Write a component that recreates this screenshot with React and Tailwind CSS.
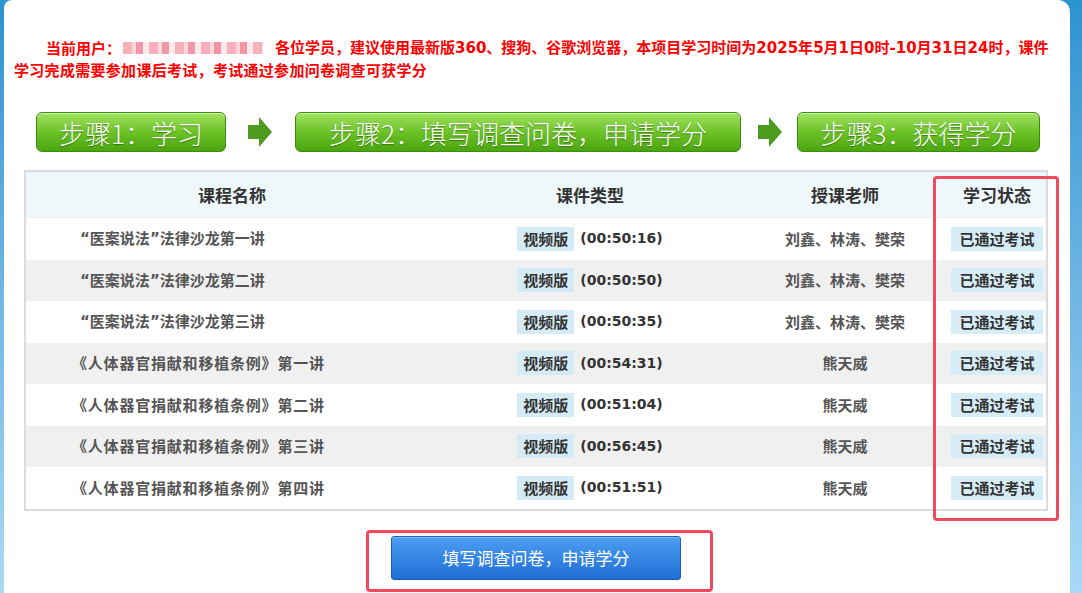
import React from "react";

const Q = ({ c }) => (
  <span style={{ fontFamily: "Verdana, 'DejaVu Sans', sans-serif" }}>{c}</span>
);

const rows = [
  [<><Q c={"\u201C"} />医案说法<Q c={"\u201D"} />法律沙龙第一讲</>, "(00:50:16)", "刘鑫、林涛、樊荣", false],
  [<><Q c={"\u201C"} />医案说法<Q c={"\u201D"} />法律沙龙第二讲</>, "(00:50:50)", "刘鑫、林涛、樊荣", false],
  [<><Q c={"\u201C"} />医案说法<Q c={"\u201D"} />法律沙龙第三讲</>, "(00:50:35)", "刘鑫、林涛、樊荣", false],
  ["《人体器官捐献和移植条例》第一讲", "(00:54:31)", "熊天威", true],
  ["《人体器官捐献和移植条例》第二讲", "(00:51:04)", "熊天威", true],
  ["《人体器官捐献和移植条例》第三讲", "(00:56:45)", "熊天威", true],
  ["《人体器官捐献和移植条例》第四讲", "(00:51:51)", "熊天威", true],
];

const font = { fontFamily: "Verdana, 'DejaVu Sans', 'Noto Sans CJK SC', sans-serif" };

function Step({ w, children }) {
  return (
    <div
      className={`${w} h-[40px] shrink-0 rounded-[6px] border border-[#3d8c0c] bg-gradient-to-b from-[#a2e260] via-[#6cc326] to-[#4aa50e] flex items-center justify-center text-white text-[26px] font-light [text-shadow:0_1px_1px_rgba(0,0,0,0.35)] shadow-[inset_0_1px_0_rgba(255,255,255,0.5)]`}
      style={{ fontFamily: "'Noto Sans CJK SC', sans-serif" }}
    >
      {children}
    </div>
  );
}

function Arrow() {
  return (
    <svg width="24" height="30" viewBox="0 0 24 30" className="shrink-0">
      <polygon points="0,8 11,8 11,0 24,15 11,30 11,22 0,22" fill="#4e9a1e" />
    </svg>
  );
}

export default function App() {
  return (
    <div className="w-[1082px] h-[593px] overflow-hidden bg-gradient-to-b from-[#2a93d0] to-[#a9d9f6] flex pl-[4px] pr-[12px]">
      <div className="flex-1 bg-white rounded-tl-[8px] rounded-tr-[12px] flex flex-col">
        <div
          className="pt-[36px] pl-[10px] pr-[4px] text-[15px] font-bold text-[#ff0000] leading-[21px] whitespace-nowrap"
          style={{ fontFamily: "'Noto Sans CJK SC', sans-serif" }}
        >
          <div className="pl-[32px] flex items-center">
            <span>当前用户：</span>
            <span className="inline-block w-[140px] h-[12px] mx-[2px] bg-[repeating-linear-gradient(90deg,#f6a8b4_0px,#f6a8b4_9px,#fbd3da_9px,#fbd3da_13px,#ee8a9b_13px,#ee8a9b_20px,#fde6ea_20px,#fde6ea_26px)] opacity-90"></span>
            <span className="ml-[10px]">
              各位学员，建议使用最新版<span style={font}>360</span>、搜狗、谷歌浏览器，本项目学习时间为<span style={font}>2025</span>年<span style={font}>5</span>月<span style={font}>1</span>日<span style={font}>0</span>时<span style={font}>-10</span>月<span style={font}>31</span>日<span style={font}>24</span>时，课件
            </span>
          </div>
          <div className="tracking-[0.3px]">学习完成需要参加课后考试，考试通过参加问卷调查可获学分</div>
        </div>

        <div className="mt-[32px] pl-[32px] flex items-center">
          <Step w="w-[190px]">步骤1：学习</Step>
          <div className="ml-[22px] mr-[23px] flex"><Arrow /></div>
          <Step w="w-[446px]">步骤2：填写调查问卷，申请学分</Step>
          <div className="ml-[17px] mr-[15px] flex"><Arrow /></div>
          <Step w="w-[243px]">步骤3：获得学分</Step>
        </div>

        <div className="relative mt-[18px] ml-[20px] w-[1024px]">
          <div
            className="border-2 border-[#dcdcdc] text-[15px] font-bold"
            style={{ fontFamily: "'Noto Sans CJK SC', sans-serif" }}
          >
            <div className="grid grid-cols-[412px_304px_206px_1fr] h-[46px] items-center bg-[#eef7fa] text-[#333] text-[17px] border-b border-[#e6eef2]">
              <div className="text-center">课程名称</div>
              <div className="text-center">课件类型</div>
              <div className="text-center">授课老师</div>
              <div className="text-center">学习状态</div>
            </div>
            {rows.map((r, i) => (
              <div
                key={i}
                className={`grid grid-cols-[412px_304px_206px_1fr] h-[41.5px] items-center text-[#555] ${i % 2 === 1 ? "bg-[#f0f0f0]" : "bg-white"}`}
              >
                <div className={r[3] ? "pl-[46px] tracking-[0.8px]" : "pl-[54px]"}>{r[0]}</div>
                <div className="flex justify-center items-center gap-[6px] text-[14px]">
                  <span className="bg-[#d4ebf5] text-[#333] px-[6px] h-[24px] flex items-center text-[15px]">视频版</span>
                  <span className="text-[#333]" style={font}>{r[1]}</span>
                </div>
                <div className="text-center">{r[2]}</div>
                <div className="flex justify-center">
                  <span className="bg-[#d6ecf6] text-[#333] w-[92px] h-[24px] flex items-center justify-center">已通过考试</span>
                </div>
              </div>
            ))}
          </div>
          <div className="absolute left-[909px] top-[6px] w-[126px] h-[345px] border-[3px] border-[#f04a5f] rounded-[4px] pointer-events-none"></div>
        </div>

        <div className="mt-[19px] ml-[362px] w-[347px] h-[62px] border-[3px] border-[#f04a5f] rounded-[4px] pl-[22px] pt-[3px]">
          <button
            className="w-[290px] h-[44px] rounded-[3px] border border-[#1b5db5] bg-gradient-to-b from-[#4d9ef2] to-[#1f6ed6] text-white text-[17px] shadow-[inset_0_1px_0_rgba(255,255,255,0.35)]"
            style={{ fontFamily: "'Noto Sans CJK SC', sans-serif" }}
          >
            填写调查问卷，申请学分
          </button>
        </div>
      </div>
    </div>
  );
}
